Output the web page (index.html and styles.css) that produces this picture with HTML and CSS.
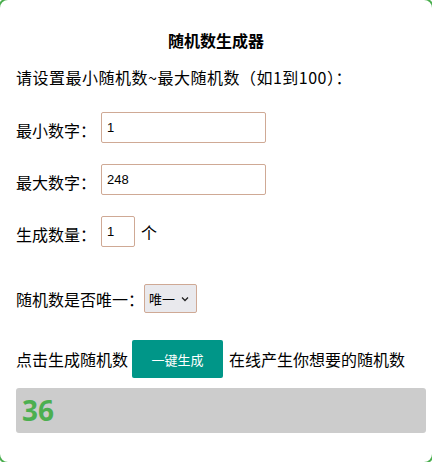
FILE: index.html
```html
<!DOCTYPE html>
<html lang="zh">
<head>
<meta charset="utf-8">
<title>随机数生成器</title>
<link rel="stylesheet" href="styles.css">
</head>
<body>
<div class="box">
  <h1 class="title">随机数生成器</h1>
  <p class="intro">请设置最小随机数~最大随机数（如1到100）：</p>
  <div class="row row-min">
    <span class="label">最小数字：</span>
    <input class="field" type="text" value="1">
  </div>
  <div class="row row-next">
    <span class="label">最大数字：</span>
    <input class="field" type="text" value="248">
  </div>
  <div class="row row-next">
    <span class="label">生成数量：</span>
    <input class="field small" type="text" value="1">
    <span class="unit">个</span>
  </div>
  <div class="row row-unique">
    <span class="label-tight">随机数是否唯一：</span>
    <span class="select-wrap">
      <select class="select">
        <option>唯一</option>
        <option>不唯一</option>
      </select>
      <svg class="chev" width="8" height="6" viewBox="0 0 8 6"><path d="M1 1.5 L4 4.5 L7 1.5" fill="none" stroke="#222" stroke-width="1.3"/></svg>
    </span>
  </div>
  <div class="row row-gen">
    <span>点击生成随机数</span>
    <button class="btn">一键生成</button>
    <span>在线产生你想要的随机数</span>
  </div>
  <div class="result">36</div>
</div>
</body>
</html>
```
FILE: styles.css
```css
html, body {
  margin: 0;
  padding: 0;
  overflow: hidden;
}
body {
  font-family: "Noto Sans CJK SC", "Noto Sans", sans-serif;
  font-size: 16px;
  color: #000;
  background: #fff;
}
.box {
  margin: -2px;
  border: 2px solid #4caf50;
  border-radius: 10px;
  padding: 28px 6px 29px 16px;
}
.title {
  margin: 0 10px 0 0;
  font-size: 16px;
  font-weight: bold;
  line-height: 24px;
  text-align: center;
}
.intro {
  margin: 13px 0 0;
  line-height: 24px;
  letter-spacing: 0.5px;
}
.row {
  display: flex;
  align-items: center;
  line-height: 24px;
}
.row-min { margin-top: 23px; }
.row-next { margin-top: 21px; }
.row-unique { margin-top: 37px; }
.row-gen { margin-top: 27px; }
.label {
  width: 85px;
  padding-top: 4px;
}
.label-tight {
  width: 128px;
}
.field {
  box-sizing: border-box;
  width: 165px;
  height: 31px;
  border: 1px solid #cfa995;
  border-radius: 2px;
  padding: 0 5px;
  font-family: "Liberation Sans", sans-serif;
  font-size: 13px;
  color: #000;
  outline: none;
}
.field.small {
  width: 34px;
}
.unit {
  margin-left: 6px;
}
.select-wrap {
  position: relative;
  display: inline-block;
}
.select {
  appearance: none;
  -webkit-appearance: none;
  box-sizing: border-box;
  width: 53px;
  height: 29px;
  border: 1px solid #cfa995;
  border-radius: 2px;
  background: #e9e9ed;
  padding: 0 0 0 4px;
  font-family: "Noto Sans CJK SC", sans-serif;
  font-size: 13px;
  color: #000;
  outline: none;
  display: block;
}
.chev {
  position: absolute;
  right: 8px;
  top: 12px;
}
.btn {
  box-sizing: border-box;
  width: 91px;
  height: 38px;
  margin: 0 6px 0 4px;
  border: none;
  border-radius: 2px;
  background: #009688;
  color: #fff;
  font-family: "Noto Sans CJK SC", sans-serif;
  font-size: 13px;
}
.result {
  margin-top: 10px;
  height: 45px;
  box-sizing: border-box;
  background: #cccccc;
  border-radius: 3px;
  padding-left: 6px;
  font-family: "Noto Sans", sans-serif;
  font-weight: bold;
  font-size: 28px;
  line-height: 45px;
  color: #4caf50;
}
```
